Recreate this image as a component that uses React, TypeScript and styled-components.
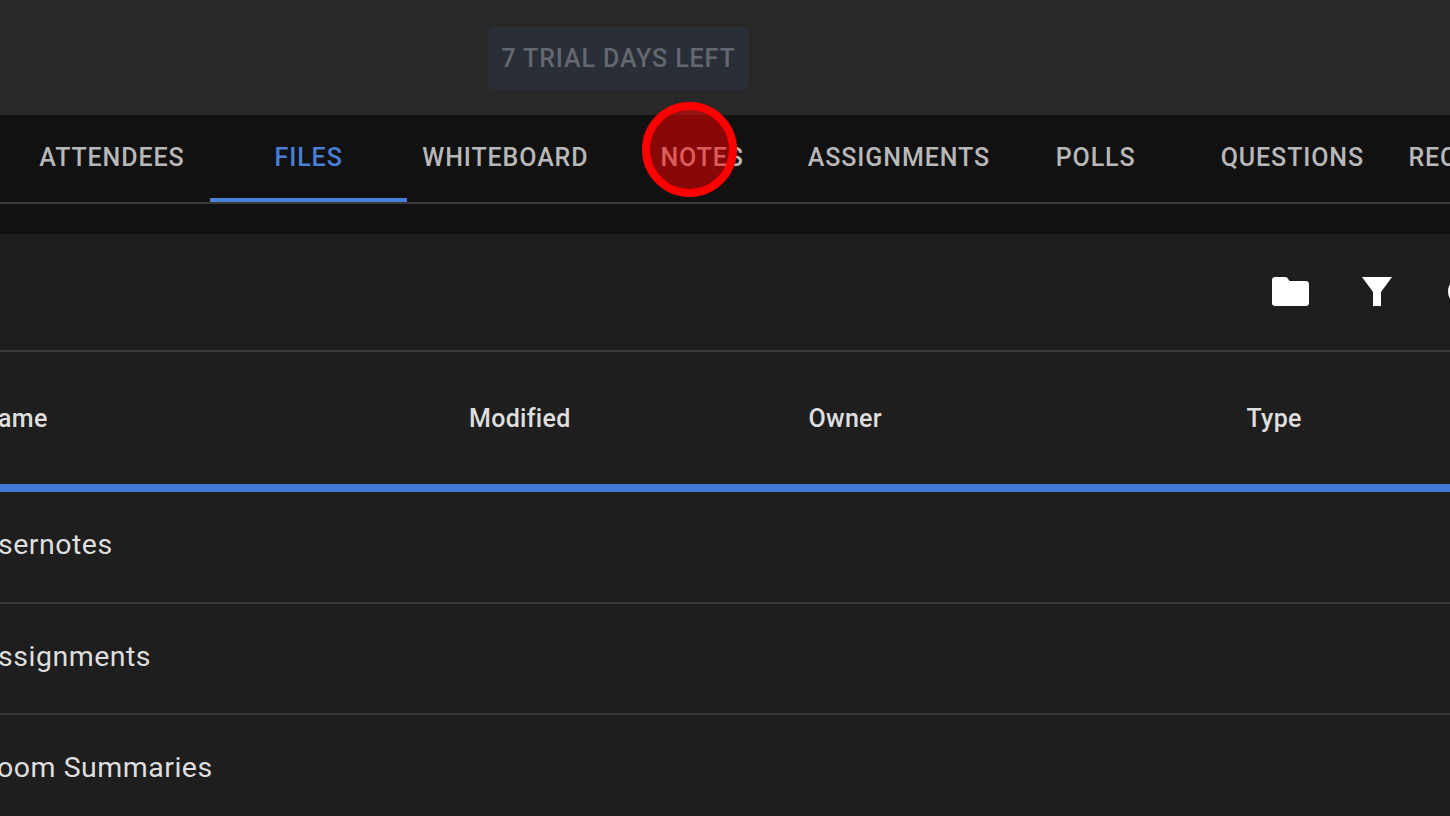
import { type FC } from "react";
import styled, { createGlobalStyle } from "styled-components";

const GlobalStyle = createGlobalStyle`
  html, body {
    margin: 0;
    padding: 0;
    width: 1450px;
    height: 816px;
    overflow: hidden;
    background: #1e1e1e;
    font-family: Roboto, "Liberation Sans", sans-serif;
  }
`;

const Page = styled.div`
  position: relative;
  width: 1450px;
  height: 816px;
  overflow: hidden;
  display: flex;
  flex-direction: column;
`;

const TopBar = styled.header`
  height: 115px;
  flex: none;
  box-sizing: border-box;
  padding: 27px 0 0 488px;
  background: #282828;
`;

const TrialBadge = styled.div`
  width: 261px;
  height: 63px;
  box-sizing: border-box;
  display: flex;
  align-items: center;
  justify-content: center;
  border-radius: 6px;
  background: #2a2e37;
  color: #636870;
  font-size: 25px;
  font-weight: 500;
  letter-spacing: 0.9px;
  white-space: nowrap;
`;

const TabBar = styled.nav`
  height: 89px;
  flex: none;
  box-sizing: border-box;
  display: flex;
  padding-left: 13.5px;
  background: #111111;
  border-bottom: 2px solid #3a3a3a;
  overflow: hidden;
`;

const Tab = styled.div<{ $active?: boolean }>`
  flex: 0 0 196.75px;
  display: flex;
  align-items: center;
  justify-content: center;
  padding-top: 2px;
  box-sizing: border-box;
  height: 87px;
  color: ${(p) => (p.$active ? "#4a7fd6" : "#b8b8b8")};
  font-size: 25px;
  font-weight: 500;
  letter-spacing: 0.9px;
  white-space: nowrap;
  border-bottom: 4px solid ${(p) => (p.$active ? "#4a7fd6" : "transparent")};
`;

const Gap = styled.div`
  height: 30px;
  flex: none;
  background: #111111;
`;

const Toolbar = styled.div`
  height: 116px;
  flex: none;
  box-sizing: border-box;
  display: flex;
  align-items: center;
  justify-content: flex-end;
  gap: 53px;
  padding-bottom: 1px;
  margin-right: -28px;
`;

const ToolIcon = styled.svg<{ $nudge?: number }>`
  flex: none;
  display: block;
  fill: #ffffff;
  margin-left: ${(p) => p.$nudge ?? 0}px;
`;

const HeaderRow = styled.div`
  height: 142px;
  flex: none;
  box-sizing: border-box;
  display: grid;
  grid-template-columns: 469px 339.5px 438px 1fr;
  align-items: center;
  border-top: 2px solid #3a3a3a;
  border-bottom: 8px solid #447ad8;
  color: #dedede;
  font-size: 25px;
  font-weight: 500;
  letter-spacing: 0.3px;
`;

const HeaderCell = styled.div<{ $clipped?: boolean }>`
  margin-left: ${(p) => (p.$clipped ? "-20px" : "0")};
  white-space: nowrap;
`;

const Row = styled.div`
  height: 111.5px;
  flex: none;
  box-sizing: border-box;
  display: flex;
  align-items: center;
  padding-bottom: 4px;
  border-bottom: 2px solid #3a3a3a;
  color: #dedede;
  font-size: 28.5px;
  letter-spacing: 0.5px;
  white-space: nowrap;
`;

const RowName = styled.div`
  margin-left: -21px;
`;

const ClickMarker = styled.div`
  position: absolute;
  left: 642px;
  top: 102px;
  width: 95px;
  height: 95px;
  box-sizing: border-box;
  border-radius: 50%;
  border: 8px solid #ff0000;
  background: rgba(255, 0, 0, 0.5);
`;

const tabs = [
  "ATTENDEES",
  "FILES",
  "WHITEBOARD",
  "NOTES",
  "ASSIGNMENTS",
  "POLLS",
  "QUESTIONS",
  "RECORDINGS"
];

const rows = ["Usernotes", "Assignments", "Room Summaries"];

const App: FC = () => (
  <Page>
    <GlobalStyle />
    <TopBar>
      <TrialBadge>7 TRIAL DAYS LEFT</TrialBadge>
    </TopBar>

    <TabBar>
      {tabs.map((tab) => (
        <Tab key={tab} $active={tab === "FILES"}>
          {tab}
        </Tab>
      ))}
    </TabBar>
    <Gap />

    <Toolbar>
      {/* folder */}
      <ToolIcon width="37" height="29" viewBox="0 0 37 29">
        <path d="M3 0h10c1.200 0 2 .5 2.600 1.300L17.500 4H34c1.700 0 3 1.300 3 3v19c0 1.700-1.300 3-3 3H3c-1.700 0-3-1.300-3-3V3c0-1.700 1.300-3 3-3z" />
      </ToolIcon>
      {/* filter */}
      <ToolIcon width="30" height="29" viewBox="0 0 30 29">
        <path d="M0 0h30L19 15v14h-8V15z" />
      </ToolIcon>
      {/* next action, cut off by the edge */}
      <ToolIcon $nudge={3} width="30" height="29" viewBox="0 0 30 29">
        <circle cx="15" cy="14.500" r="13" fill="none" stroke="#fff" strokeWidth="4" />
      </ToolIcon>
    </Toolbar>

    <HeaderRow>
      <HeaderCell $clipped>Name</HeaderCell>
      <HeaderCell>Modified</HeaderCell>
      <HeaderCell>Owner</HeaderCell>
      <HeaderCell>Type</HeaderCell>
    </HeaderRow>

    {rows.map((row) => (
      <Row key={row}>
        <RowName>{row}</RowName>
      </Row>
    ))}

    <ClickMarker />
  </Page>
);

export default App;
